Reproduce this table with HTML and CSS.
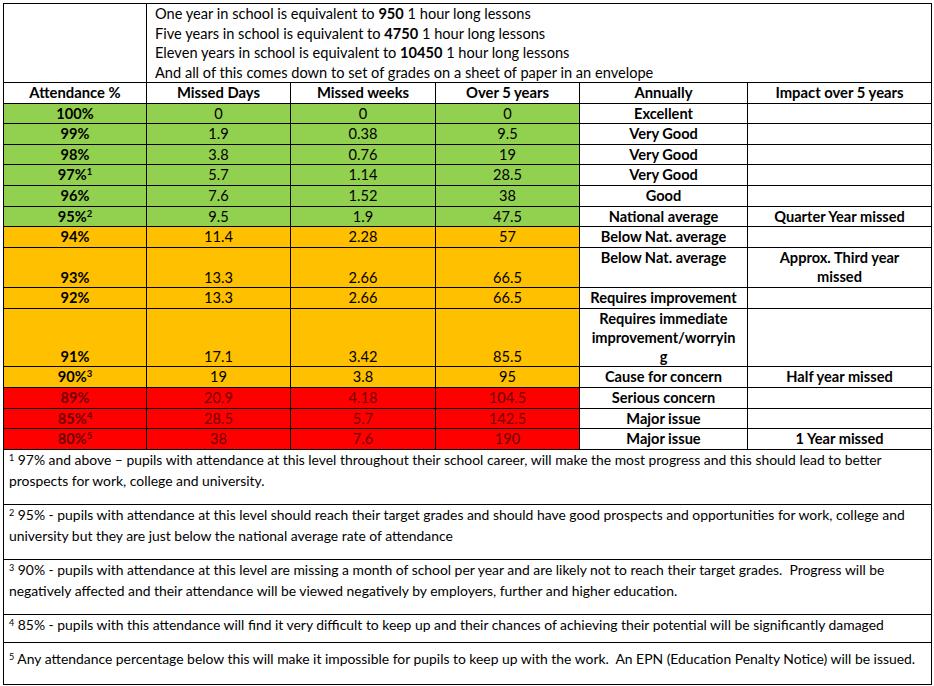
FILE: index.html
```html
<!DOCTYPE html>
<html>
<head>
<meta charset="utf-8">
<link rel="stylesheet" href="styles.css">
</head>
<body>
<table class="att">
  <colgroup>
    <col class="c1"><col class="c2"><col class="c3"><col class="c4"><col class="c5"><col class="c6">
  </colgroup>
  <tr class="intro">
    <td></td>
    <td colspan="5" class="introtext">
      <div>One year in school is equivalent to <b>950</b> 1 hour long lessons</div>
      <div>Five years in school is equivalent to <b>4750</b> 1 hour long lessons</div>
      <div>Eleven years in school is equivalent to <b>10450</b> 1 hour long lessons</div>
      <div>And all of this comes down to set of grades on a sheet of paper in an envelope</div>
    </td>
  </tr>
  <tr class="head">
    <th>Attendance %</th><th>Missed Days</th><th>Missed weeks</th><th>Over 5 years</th><th>Annually</th><th>Impact over 5 years</th>
  </tr>
  <tr class="g"><td class="pct">100%</td><td class="n">0</td><td class="n">0</td><td class="n">0</td><td class="t">Excellent</td><td class="t"></td></tr>
  <tr class="g"><td class="pct">99%</td><td class="n">1.9</td><td class="n">0.38</td><td class="n">9.5</td><td class="t">Very Good</td><td class="t"></td></tr>
  <tr class="g"><td class="pct">98%</td><td class="n">3.8</td><td class="n">0.76</td><td class="n">19</td><td class="t">Very Good</td><td class="t"></td></tr>
  <tr class="g"><td class="pct">97%<sup>1</sup></td><td class="n">5.7</td><td class="n">1.14</td><td class="n">28.5</td><td class="t">Very Good</td><td class="t"></td></tr>
  <tr class="g"><td class="pct">96%</td><td class="n">7.6</td><td class="n">1.52</td><td class="n">38</td><td class="t">Good</td><td class="t"></td></tr>
  <tr class="g"><td class="pct">95%<sup>2</sup></td><td class="n">9.5</td><td class="n">1.9</td><td class="n">47.5</td><td class="t">National average</td><td class="t">Quarter Year missed</td></tr>
  <tr class="o"><td class="pct">94%</td><td class="n">11.4</td><td class="n">2.28</td><td class="n">57</td><td class="t">Below Nat. average</td><td class="t"></td></tr>
  <tr class="o h2"><td class="pct">93%</td><td class="n">13.3</td><td class="n">2.66</td><td class="n">66.5</td><td class="t">Below Nat. average</td><td class="t">Approx. Third year<br>missed</td></tr>
  <tr class="o"><td class="pct">92%</td><td class="n">13.3</td><td class="n">2.66</td><td class="n">66.5</td><td class="t">Requires improvement</td><td class="t"></td></tr>
  <tr class="o h3"><td class="pct">91%</td><td class="n">17.1</td><td class="n">3.42</td><td class="n">85.5</td><td class="t">Requires immediate<br>improvement/worryin<br>g</td><td class="t"></td></tr>
  <tr class="o"><td class="pct">90%<sup>3</sup></td><td class="n">19</td><td class="n">3.8</td><td class="n">95</td><td class="t">Cause for concern</td><td class="t">Half year missed</td></tr>
  <tr class="r"><td class="pct">89%</td><td class="n">20.9</td><td class="n">4.18</td><td class="n">104.5</td><td class="t">Serious concern</td><td class="t"></td></tr>
  <tr class="r"><td class="pct">85%<sup>4</sup></td><td class="n">28.5</td><td class="n">5.7</td><td class="n">142.5</td><td class="t">Major issue</td><td class="t"></td></tr>
  <tr class="r"><td class="pct">80%<sup>5</sup></td><td class="n">38</td><td class="n">7.6</td><td class="n">190</td><td class="t">Major issue</td><td class="t">1 Year missed</td></tr>
  <tr class="fn fn1"><td colspan="6"><div class="fntext"><sup>1</sup> 97% and above – pupils with attendance at this level throughout their school career, will make the most progress and this should lead to better prospects for work, college and university.</div></td></tr>
  <tr class="fn fn2"><td colspan="6"><div class="fntext"><sup>2</sup> 95% - pupils with attendance at this level should reach their target grades and should have good prospects and opportunities for work, college and university but they are just below the national average rate of attendance</div></td></tr>
  <tr class="fn fn3"><td colspan="6"><div class="fntext"><sup>3</sup> 90% - pupils with attendance at this level are missing a month of school per year and are likely not to reach their target grades.&nbsp; Progress will be negatively affected and their attendance will be viewed negatively by employers, further and higher education.</div></td></tr>
  <tr class="fn fn4"><td colspan="6"><div class="fntext"><sup>4</sup> 85% - pupils with this attendance will find it very difficult to keep up and their chances of achieving their potential will be significantly damaged</div></td></tr>
  <tr class="fn fn5"><td colspan="6"><div class="fntext"><sup>5</sup> Any attendance percentage below this will make it impossible for pupils to keep up with the work.&nbsp; An EPN (Education Penalty Notice) will be issued.</div></td></tr>
</table>
</body>
</html>
```

FILE: styles.css
```css
html, body {
  margin: 0;
  padding: 0;
  background: #fff;
}
body {
  padding: 3px 0 0 3px;
  font-family: Lato, "Open Sans", "Liberation Sans", sans-serif;
  font-size: 14.6px;
  color: #000;
}
.att {
  border-collapse: collapse;
  table-layout: fixed;
  width: 928px;
}
.c1 { width: 143px; }
.c2 { width: 144px; }
.c3 { width: 145px; }
.c4 { width: 144px; }
.c5 { width: 168px; }
.c6 { width: 184px; }
.att td, .att th {
  border: 1px solid #000;
  padding: 0 6px;
  line-height: 19.6px;
  height: 19.6px;
  text-align: center;
  vertical-align: bottom;
  overflow: hidden;
}
.att th {
  font-weight: bold;
  font-size: 14.8px;
}
.intro td {
  vertical-align: top;
}
.att .introtext {
  text-align: left;
  padding: 0 0 0 8px;
  height: 78px;
}
.introtext div {
  line-height: 19.5px;
}
.pct { font-weight: bold; }
.att .t {
  font-weight: bold;
  background: #fff;
  vertical-align: top;
}
.g td.pct, .g td.n { background: #92d050; }
.o td.pct, .o td.n { background: #ffc000; }
.r td.pct, .r td.n { background: #ff0000; color: #700000; }
.att .h2 td { height: 39.5px; }
.att .h3 td { height: 57.5px; line-height: 19.2px; }
sup {
  font-size: 9.5px;
  line-height: 0;
  vertical-align: 5px;
}
.att .fn td {
  text-align: left;
  vertical-align: top;
  font-size: 13.9px;
  padding: 0 4px 0 5px;
}
.fntext {
  line-height: 20.8px;
}
.fn sup { font-size: 9px; vertical-align: 4px; }
.att .fn1 td, .att .fn2 td, .att .fn3 td { height: 54px; }
.att .fn4 td { height: 27px; }
.att .fn5 td { height: 35px; padding-top: 6px; }
```
